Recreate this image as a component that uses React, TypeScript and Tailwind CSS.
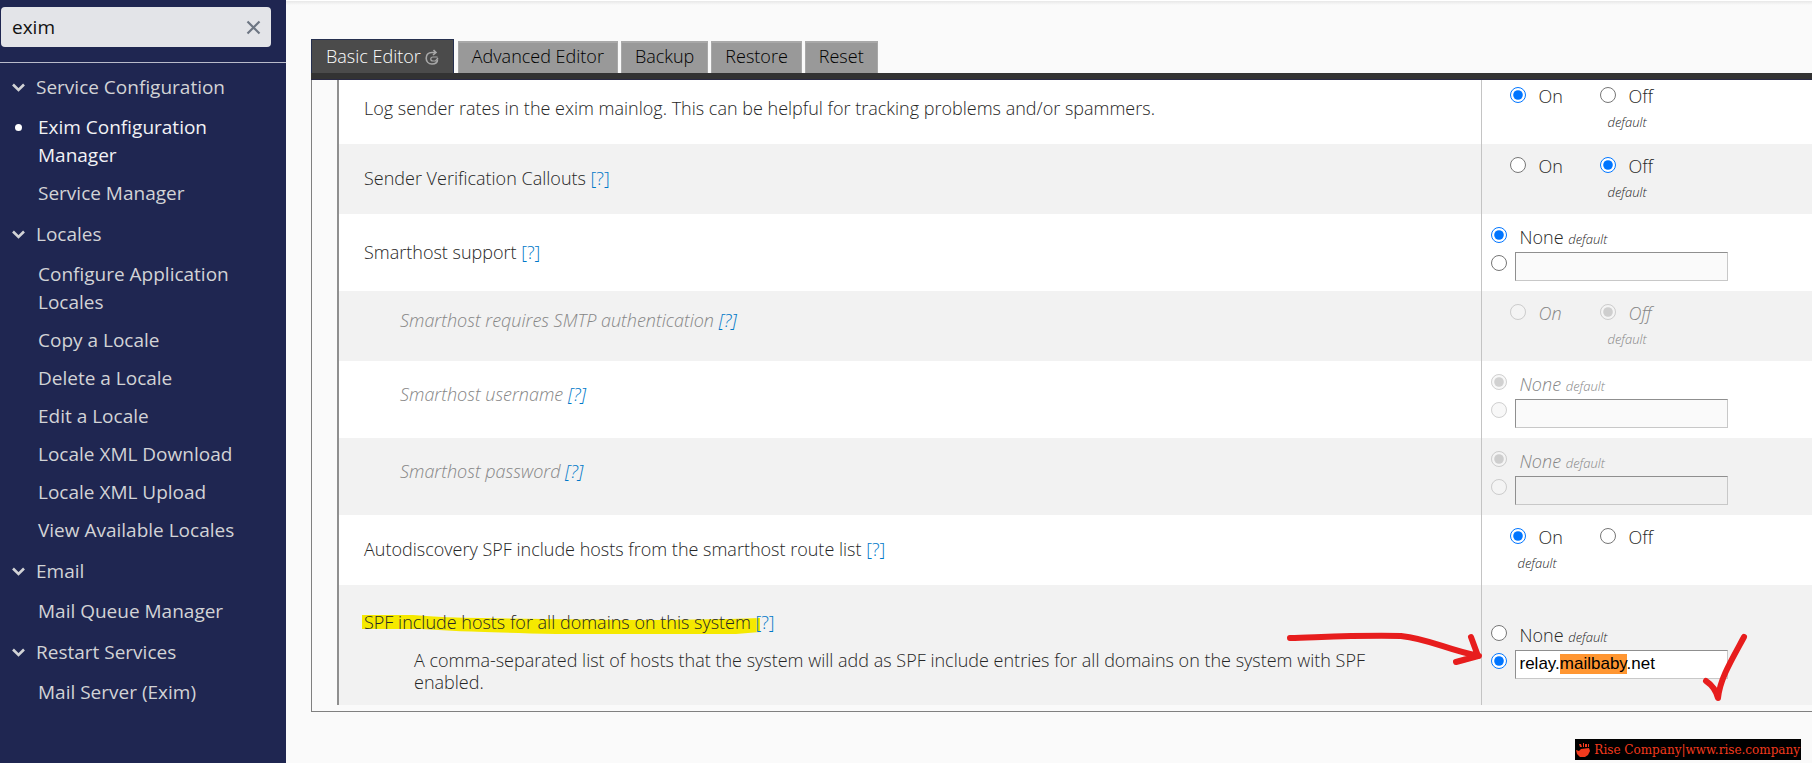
import React, { useEffect, useRef } from "react";
import clsx from "clsx";

interface NavItem {
  label: string;
  active?: boolean;
}

interface NavGroup {
  title: string;
  items: NavItem[];
}

const groups: NavGroup[] = [
  {
    title: "Service Configuration",
    items: [{ label: "Exim Configuration Manager", active: true }, { label: "Service Manager" }],
  },
  {
    title: "Locales",
    items: [
      { label: "Configure Application Locales" },
      { label: "Copy a Locale" },
      { label: "Delete a Locale" },
      { label: "Edit a Locale" },
      { label: "Locale XML Download" },
      { label: "Locale XML Upload" },
      { label: "View Available Locales" },
    ],
  },
  { title: "Email", items: [{ label: "Mail Queue Manager" }] },
  { title: "Restart Services", items: [{ label: "Mail Server (Exim)" }] },
];

const tabs = ["Advanced Editor", "Backup", "Restore", "Reset"];

function Sidebar() {
  return (
    <aside className="w-[286px] shrink-0 bg-[#1f2651] text-[19px] leading-7 text-[#d2d3d6]">
      <div className="border-b border-[#b9bbca] pt-[7px] pb-[15px] pl-px pr-[15px]">
        <div className="flex h-10 items-center rounded bg-[#e3e4e8] pl-[11px] pr-[10px]">
          <input
            type="text"
            aria-label="Search tools"
            defaultValue="exim"
            className="min-w-0 flex-1 bg-transparent text-[19px] text-[#111] outline-none"
          />
          <button type="button" aria-label="Clear search" className="text-[#6e7683]">
            <svg width="15" height="15" viewBox="0 0 15 15" fill="none" stroke="currentColor" strokeWidth="2.2">
              <path d="M1.5 1.5l12 12M13.5 1.5l-12 12" />
            </svg>
          </button>
        </div>
      </div>
      <nav className="pt-[3px]">
        {groups.map(group => (
          <section key={group.title} className="pb-px">
            <button type="button" className="flex h-[42px] w-full items-center gap-[11px] pl-3 text-left">
              <svg width="13" height="9" viewBox="0 0 13 9" fill="none" stroke="currentColor" strokeWidth="2.6">
                <path d="M1 1.5l5.5 5.5L12 1.5" />
              </svg>
              {group.title}
            </button>
            <ul>
              {group.items.map(item => (
                <li key={item.label} className="flex pl-[15px]">
                  <span className="w-[23px] shrink-0 pt-4">
                    {item.active && <span className="block size-[7px] rounded-full bg-white" />}
                  </span>
                  <a href="#" className={clsx("max-w-[220px] py-[5px]", item.active && "text-[#f2f2f5]")}>
                    {item.label}
                  </a>
                </li>
              ))}
            </ul>
          </section>
        ))}
      </nav>
    </aside>
  );
}

function Radio({ name, label, checked, disabled }: { name: string; label: string; checked?: boolean; disabled?: boolean }) {
  return (
    <input
      type="radio"
      name={name}
      aria-label={label}
      defaultChecked={checked}
      disabled={disabled}
      className="m-0 size-4 shrink-0"
    />
  );
}

interface OnOffProps {
  name: string;
  value: "on" | "off";
  def: "on" | "off";
  disabled?: boolean;
}

function OnOff({ name, value, def, disabled }: OnOffProps) {
  return (
    <div className="flex h-[70px] pt-[9px] pl-[28px]">
      {(["on", "off"] as const).map(opt => (
        <label key={opt} className="block w-[90px]">
          <span className="flex gap-[13px] leading-6">
            <span className="flex pt-1">
              <Radio name={name} label={opt === "on" ? "On" : "Off"} checked={value === opt} disabled={disabled} />
            </span>
            <span className="pt-px">{opt === "on" ? "On" : "Off"}</span>
          </span>
          {def === opt && <em className="block pl-2 text-[13px] leading-7">default</em>}
        </label>
      ))}
    </div>
  );
}

interface TextChoiceProps {
  name: string;
  label: string;
  value?: string;
  match?: string;
  disabled?: boolean;
  inputClass: string;
}

function TextChoice({ name, label, value = "", match, disabled, inputClass }: TextChoiceProps) {
  const ref = useRef<HTMLInputElement>(null);

  // keep the searched term selected in the field
  useEffect(() => {
    if (!match || !ref.current) return;
    const start = value.indexOf(match);
    ref.current.focus({ preventScroll: true });
    ref.current.setSelectionRange(start, start + match.length);
  }, [match, value]);

  return (
    <div className="pt-[9px] pb-[10px] pl-[9px]">
      <label className="flex h-[29px] gap-[13px] pt-1">
        <Radio name={name} label="None" checked={!value} disabled={disabled} />
        <span className="leading-5">
          None <em className="text-[13px]">default</em>
        </span>
      </label>
      <div className="flex gap-2">
        <span className="pt-[3px] leading-4">
          <Radio name={name} label={label + " value"} checked={!!value} disabled={disabled} />
        </span>
        <input
          ref={ref}
          type="text"
          aria-label={label}
          defaultValue={value}
          disabled={disabled}
          className={clsx(
            "h-[29px] w-[213px] border border-t-[#8f8f8f] border-r-[#c8c8c8] border-b-[#c8c8c8] border-l-[#8f8f8f] px-1 font-['Liberation_Sans',Arial,sans-serif] text-[17px] font-normal text-black outline-none selection:bg-[#ff9632] selection:text-black",
            inputClass
          )}
        />
      </div>
    </div>
  );
}

function Row({ children, control, disabled, shade }: { children: React.ReactNode; control: React.ReactNode; disabled?: boolean; shade?: boolean }) {
  return (
    <tr className={clsx(shade ? "bg-[#f2f2f2]" : "bg-white", disabled ? "text-[#868686] italic" : "text-[#262626]")}>
      <td className={clsx("border-r border-[#c4c4c4] pr-20 align-middle", disabled ? "pb-3 pl-[61px]" : "pb-[2px] pl-[25px]")}>
        {children}
      </td>
      <td className="w-[331px] align-middle">{control}</td>
    </tr>
  );
}

function Help() {
  return <a href="#" className="text-[#0078c8]">[?]</a>;
}

function Tabs() {
  return (
    <div className="flex h-[34px] items-end gap-[3px] text-[18px] font-[330]" role="tablist">
      <button
        type="button"
        role="tab"
        aria-selected="true"
        className="mr-px flex h-[34px] items-center gap-1 border border-b-0 border-[#26304f] bg-[#4b4b4b] px-[14px] text-white"
      >
        Basic Editor
        <svg width="14" height="16" viewBox="0 0 14 16" fill="none" stroke="#a8a8a8" strokeWidth="1.6">
          <path d="M8.500 1l2.500 2.500L8 6M11 3.500H7C3 3.500 1.200 6 1.200 9.200S3.500 15 7 15s5.500-2 5.500-4.500" />
          <path d="M12.500 8H8C5 8 5 12 8 12h2.500l2.500-3" strokeWidth="1.2" />
        </svg>
      </button>
      {tabs.map(tab => (
        <button
          key={tab}
          type="button"
          role="tab"
          className="h-8 border border-t-2 border-b-0 border-[#a8a8a8] bg-[#999] px-[13px] pb-1 text-black"
        >
          {tab}
        </button>
      ))}
    </div>
  );
}

export default function App() {
  return (
    <div className="flex min-h-screen overflow-hidden bg-[#fafafa] font-['Open_Sans','Noto_Sans',sans-serif]">
      <Sidebar />
      <main className="relative min-w-0 flex-1 pl-[25px]">
        <div className="-ml-[25px] mb-[34px] h-[5px] border-t border-white bg-linear-to-b from-[#e8e8e8] to-[#fafafa]" />
        <Tabs />
        <div className="h-[7px] border-b border-[#2a2a45] bg-[#333]" />
        <div className="overflow-hidden border-b border-l border-[#808080] pb-[6px] pl-[25px]">
          <table className="-mt-[6px] w-full border-collapse border-l-2 border-[#8f8f8f] text-[18px] leading-[22px] font-[330]">
            <tbody>
              <Row control={<OnOff name="rates" value="on" def="off" />}>
                Log sender rates in the exim mainlog. This can be helpful for tracking problems and/or spammers.
              </Row>
              <Row shade control={<OnOff name="callouts" value="off" def="off" />}>
                Sender Verification Callouts <Help />
              </Row>
              <Row control={<TextChoice name="smarthost" label="Smarthost support" inputClass="bg-[#fafafa]" />}>
                Smarthost support <Help />
              </Row>
              <Row shade disabled control={<OnOff name="auth" value="off" def="off" disabled />}>
                Smarthost requires SMTP authentication <Help />
              </Row>
              <Row disabled control={<TextChoice name="user" label="Smarthost username" disabled inputClass="bg-[#fafafa]" />}>
                Smarthost username <Help />
              </Row>
              <Row shade disabled control={<TextChoice name="pass" label="Smarthost password" disabled inputClass="bg-[#f0f0f0]" />}>
                Smarthost password <Help />
              </Row>
              <Row control={<OnOff name="autospf" value="on" def="on" />}>
                Autodiscovery SPF include hosts from the smarthost route list <Help />
              </Row>
              <Row
                shade
                control={
                  <div className="relative pt-[10px]">
                    <TextChoice
                      name="spf"
                      label="SPF include hosts"
                      value="relay.mailbaby.net"
                      match="mailbaby"
                      inputClass="bg-white"
                    />
                    <svg
                      className="pointer-events-none absolute -top-[11px] -left-[196px]"
                      width="470"
                      height="120"
                      viewBox="1286 590 470 120"
                      fill="none"
                      stroke="#e71d1d"
                      strokeWidth="6"
                      strokeLinecap="round"
                      strokeLinejoin="round"
                    >
                      <path d="M1290 637C1325 636 1360 634 1401 635C1430 638 1447 649 1479 655M1471 636L1478 655L1456 661" />
                      <path d="M1744 636C1731 660 1720 678 1718 697C1716 689 1712 684 1706 680" />
                    </svg>
                  </div>
                }
              >
                <div className="pt-[26px] pb-[10px]">
                  <div className="relative isolate">
                    <svg className="absolute top-0 -left-[3px] -z-10" width="400" height="24" viewBox="0 0 400 24" fill="#f5e900">
                      <path d="M1 4L52 4Q85 7 120 7L260 9Q340 9 399 7V21L375 23H195Q120 21 95 20L60 18H1Z" />
                    </svg>
                    SPF include hosts for all domains on this system <Help />
                  </div>
                  <p className="pt-4 pl-[50px]">
                    A comma-separated list of hosts that the system will add as SPF include entries for all domains on the system with SPF enabled.
                  </p>
                </div>
              </Row>
            </tbody>
          </table>
        </div>
        <div className="absolute right-[11px] bottom-[3px] flex h-[21px] items-center gap-1 bg-black px-px font-['DejaVu_Serif',serif] text-[12px] text-[#f23a1d]">
          <svg width="14" height="14" viewBox="0 0 14 14" fill="currentColor">
            <path d="M0 7l3 1 2-2 8-1 1 3-2 4-3 2H4L1 11zM3 1h2l1 3H4zM7 0h1v4H7zM9 1h2v3H9zM12 1h1v3h-1z" />
          </svg>
          <span>Rise Company|www.rise.company</span>
        </div>
      </main>
    </div>
  );
}
